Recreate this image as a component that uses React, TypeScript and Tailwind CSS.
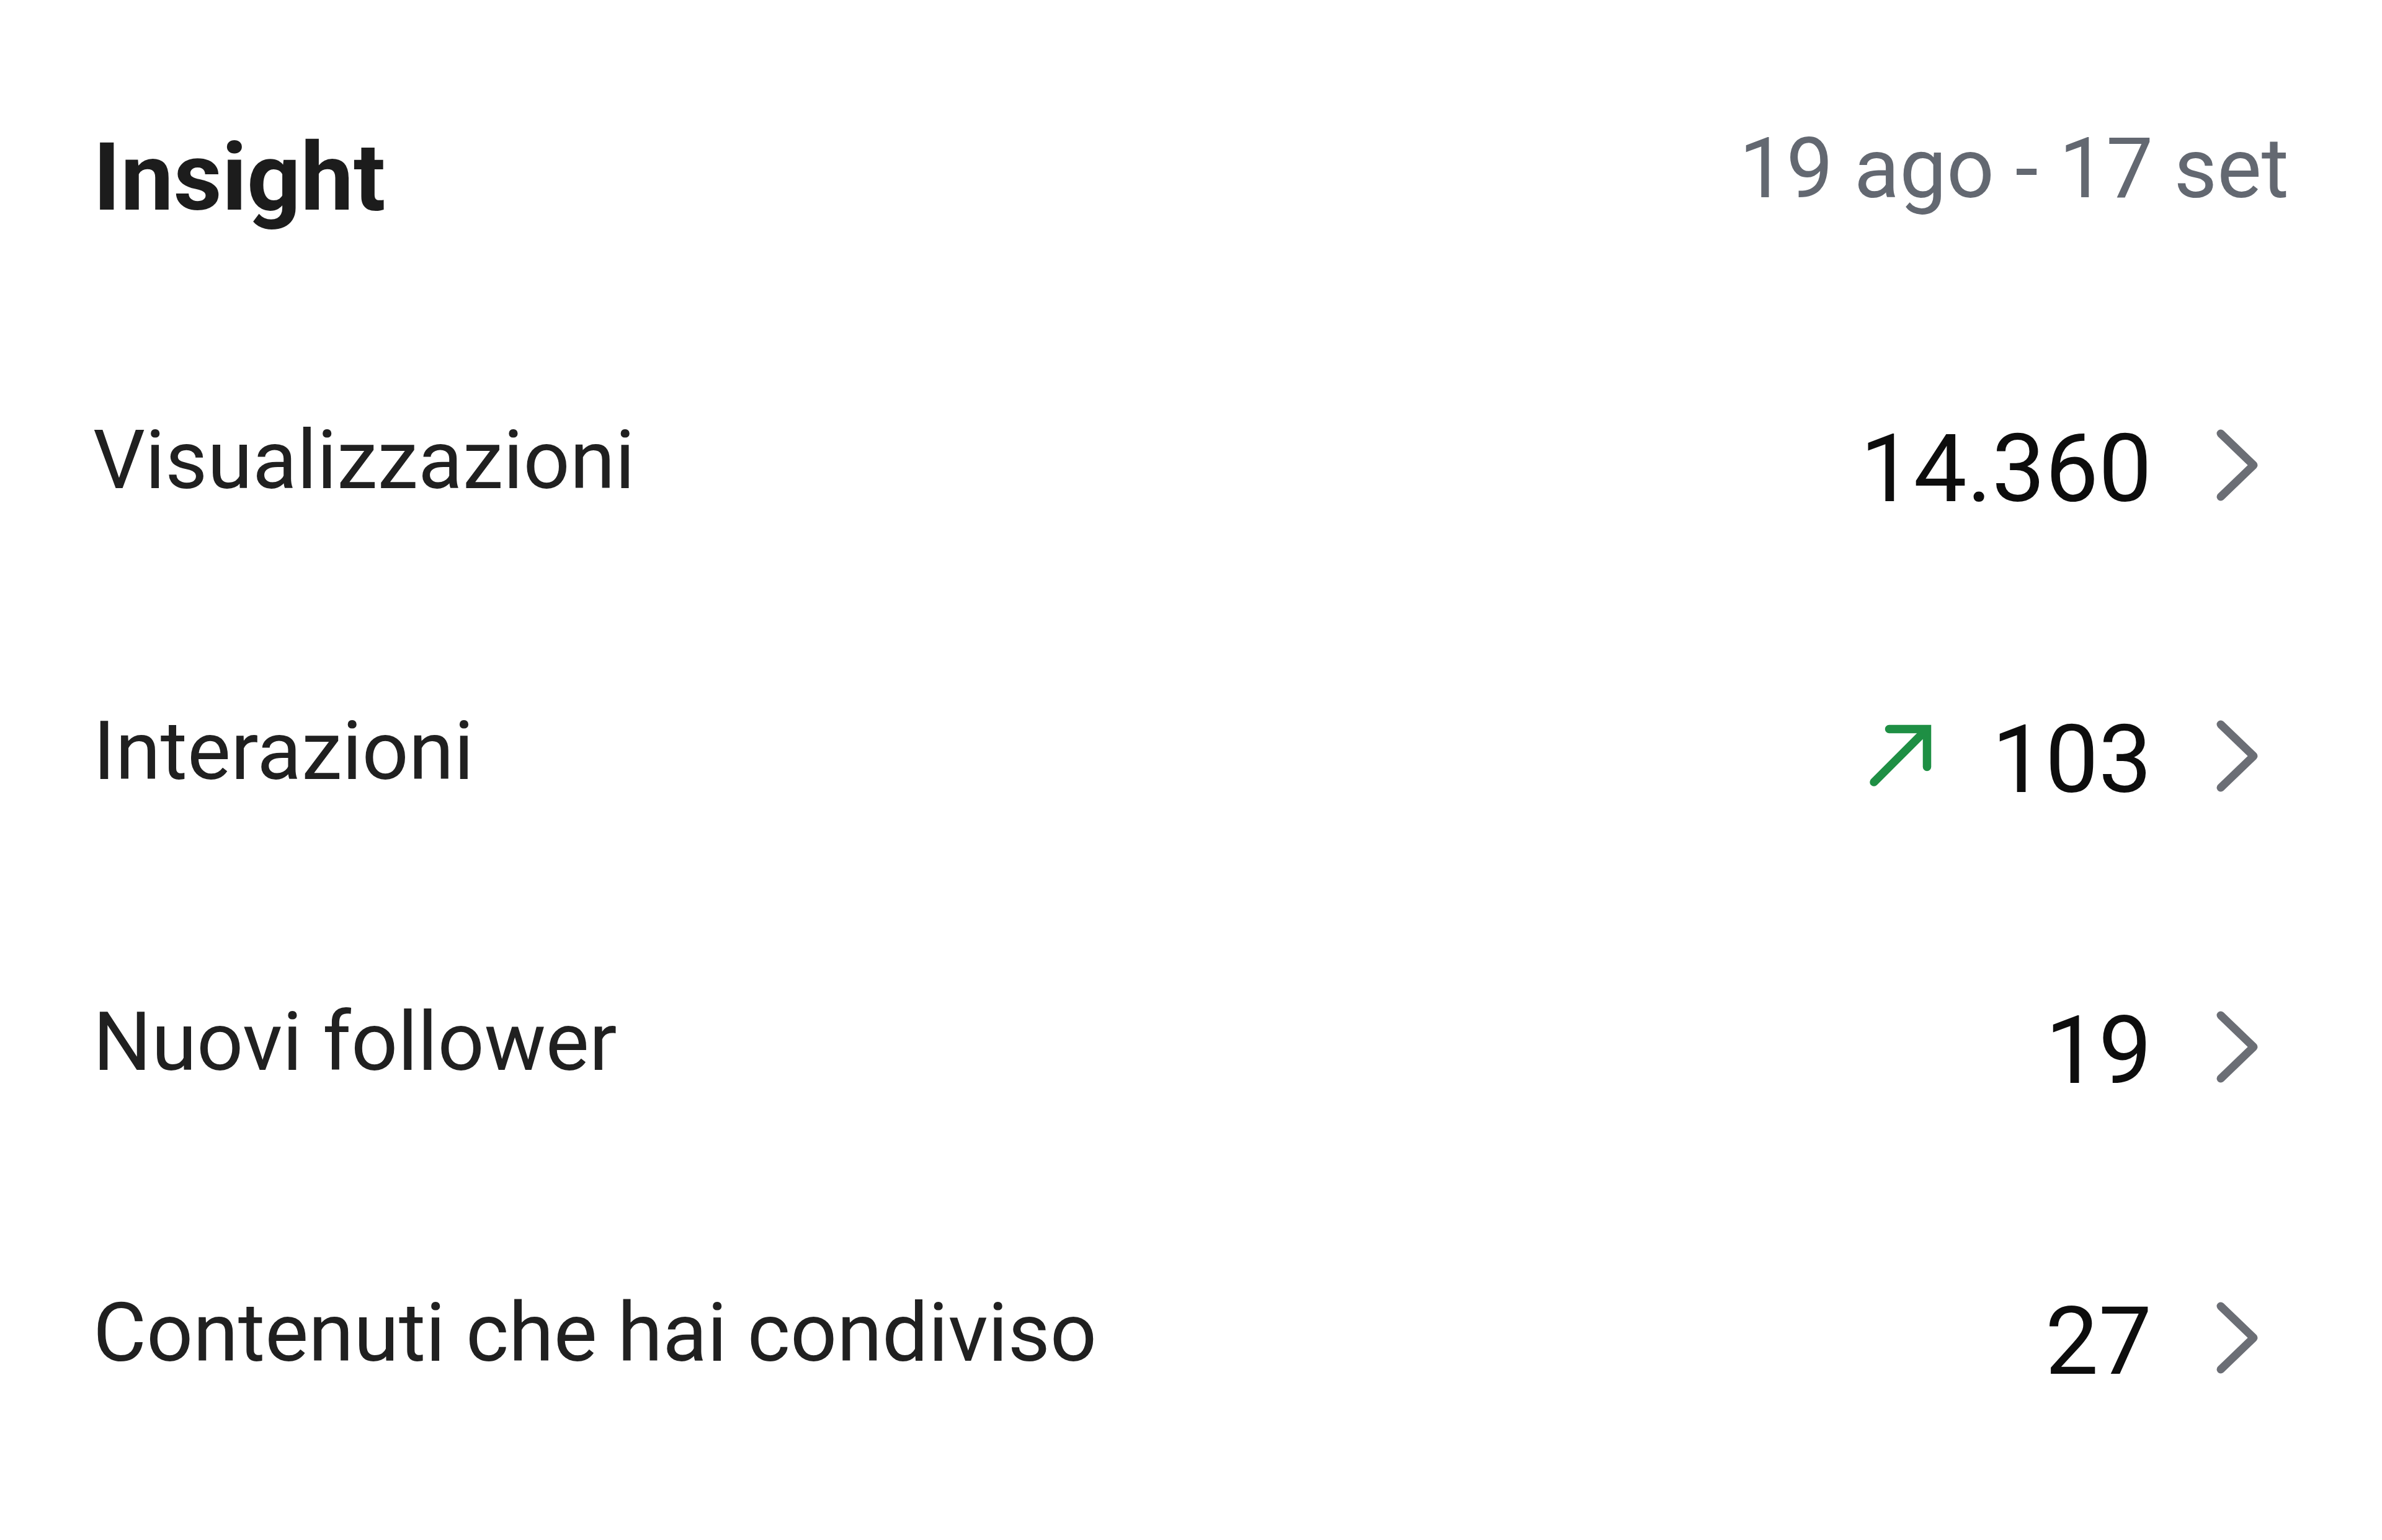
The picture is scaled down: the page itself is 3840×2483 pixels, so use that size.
import React from "react";

type Row = { label: string; value: string; trend?: boolean };

const rows: Row[] = [
  { label: "Visualizzazioni", value: "14.360" },
  { label: "Interazioni", value: "103", trend: true },
  { label: "Nuovi follower", value: "19" },
  { label: "Contenuti che hai condiviso", value: "27" },
];

function TrendUp() {
  return (
    <svg width="110" height="110" viewBox="0 0 110 110" className="mb-[13px] shrink-0" fill="none">
      <path d="M14 98 L98 14" stroke="#1e8f44" strokeWidth="13.5" strokeLinecap="round" />
      <path d="M38.5 12.5 H99.5 V73.5" stroke="#1e8f44" strokeWidth="13.5" strokeLinecap="round" strokeLinejoin="miter" />
    </svg>
  );
}

function Chevron() {
  return (
    <svg width="80" height="130" viewBox="0 0 80 130" className="ml-[101px] mr-[40px] shrink-0" fill="none">
      <path d="M10 9 L63 60 L10 111" stroke="#6b6e75" strokeWidth="13" strokeLinecap="round" strokeLinejoin="round" />
    </svg>
  );
}

export default function App() {
  return (
    <div
      className="w-full h-[2483px] bg-white pl-[150px] pr-[150px] overflow-hidden"
      style={{ fontFamily: "Roboto, 'Noto Sans', sans-serif" }}
    >
      <div className="h-[507px] pt-[64px] flex items-center justify-between">
        <h1 className="text-[152px] leading-none font-bold text-[#1c1c1c]">Insight</h1>
        <span className="text-[135px] leading-none text-[#636871] mb-[26px]">19 ago - 17 set</span>
      </div>
      {rows.map((r) => (
        <div key={r.label} className="h-[469px] flex items-center justify-between">
          <span className="text-[132px] leading-none text-[#202020]">{r.label}</span>
          <div className="flex items-center mt-[27px]">
            {r.trend && <TrendUp />}
            <span className={`text-[153px] leading-none text-[#0d0d0d] ${r.trend ? "ml-[94px]" : ""}`}>{r.value}</span>
            <Chevron />
          </div>
        </div>
      ))}
    </div>
  );
}
